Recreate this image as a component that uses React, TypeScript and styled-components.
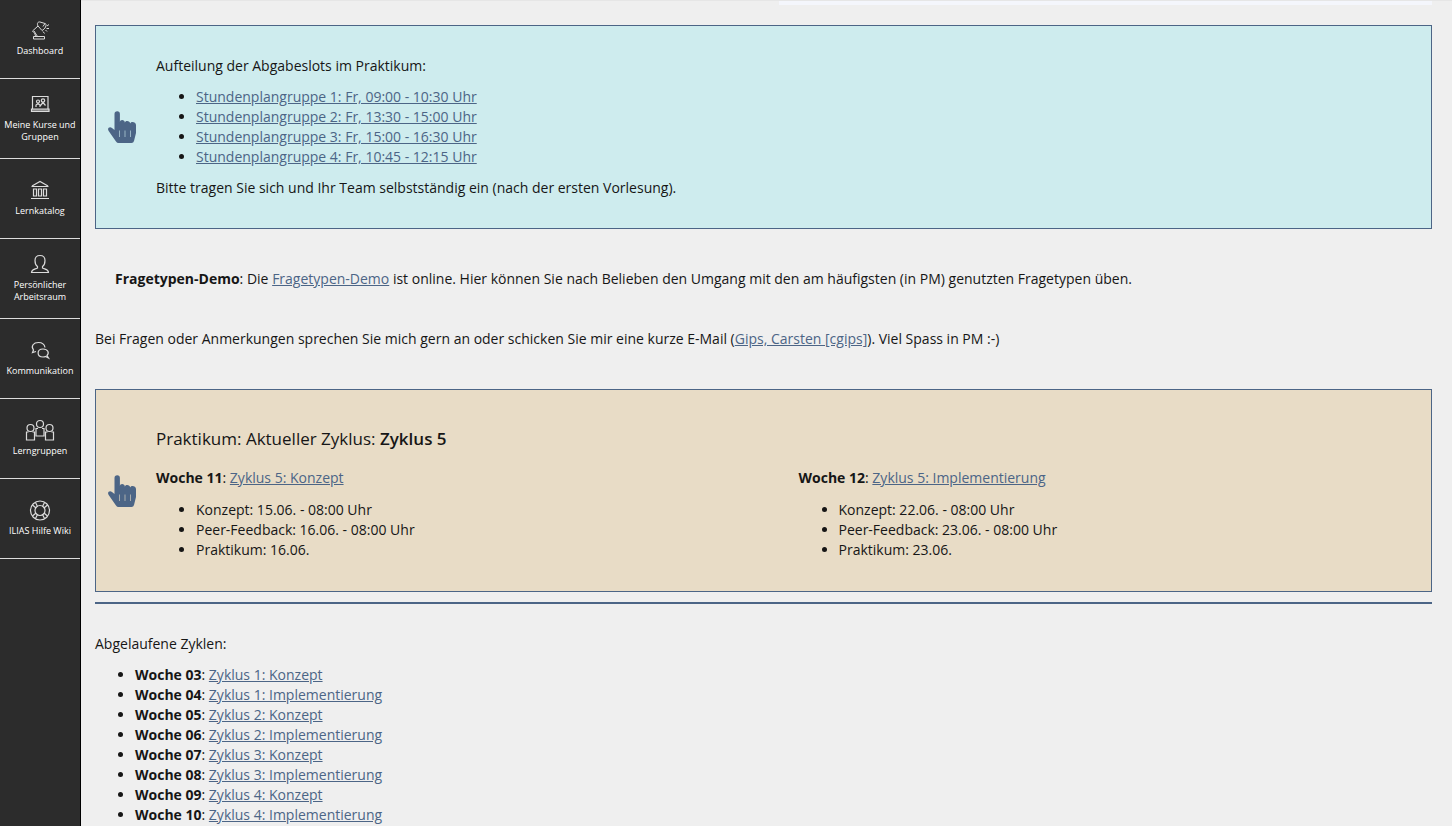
import React from "react";
import styled, { createGlobalStyle } from "styled-components";

const GlobalStyle = createGlobalStyle`
  * {
    box-sizing: border-box;
  }
  body {
    margin: 0;
    background: #efefef;
    color: #161616;
    font-family: "Open Sans", sans-serif;
    font-size: 14px;
    line-height: 20px;
  }
`;

const Layout = styled.div`
  display: flex;
  height: 100vh;
  overflow: hidden;
`;

const Sidebar = styled.nav`
  flex: 0 0 81px;
  background: #2c2c2c;
  border-right: 1px solid #000;
`;

const NavButton = styled.button`
  display: flex;
  flex-direction: column;
  align-items: center;
  justify-content: center;
  gap: 5px;
  width: 100%;
  height: 80px;
  padding: 0 0 1px;
  border: 0;
  border-bottom: 1px solid #ddd;
  background: none;
  color: #fff;
  font-family: inherit;
  font-size: 9px;
  font-weight: 500;
  line-height: 12px;
  cursor: pointer;

  &:first-child {
    height: 79px;
  }
`;

const NavIcon = styled.svg`
  display: block;
  width: 30px;
  height: 20px;
  overflow: visible;
  fill: none;
  stroke: #dcdcdc;
  stroke-width: 1.2;
`;

const Main = styled.main`
  flex: 1;
  min-width: 0;
  overflow: hidden;
  padding: 0 20px 0 14px;
  border-top: 1px solid #e6e6e6;
`;

const TopStrip = styled.div`
  width: calc(50% - 15px);
  height: 4px;
  margin: 0 0 20px auto;
  background: #f4f6fc;
`;

const Card = styled.section<{ $tone: string }>`
  display: grid;
  grid-template-columns: 60px 1fr;
  align-items: center;
  padding: 30px 0;
  border: 1px solid #4c6586;
  background: ${(p) => p.$tone};
`;

const Hand = styled.svg`
  width: 28px;
  height: 32px;
  margin-left: 12px;
  fill: #4c6586;
`;

const Text = styled.p`
  margin: 0;
`;

const Note = styled.p`
  margin: 40px 20px;
`;

const Contact = styled.p`
  margin: 0 0 40px;
`;

const List = styled.ul<{ $spaced?: boolean }>`
  margin: 11px 0 ${(p) => (p.$spaced ? "11px" : "0")};
  padding-left: 40px;
`;

const Strong = styled.strong`
  font-weight: 700;
`;

const Link = styled.a`
  color: #4c6586;
  text-decoration: underline;
`;

const Heading = styled.h3`
  margin: 7px 0 17px;
  font-size: 17px;
  font-weight: 400;
  line-height: 24px;

  ${Strong} {
    font-weight: 600;
  }
`;

const Weeks = styled.div`
  display: grid;
  grid-template-columns: 1fr 1fr;
  gap: 10px;
`;

const Week = styled.div`
  display: flex;
  flex-direction: column;
  gap: 1px;
  padding-bottom: 1px;
`;

const Divider = styled.hr`
  height: 2px;
  margin: 10px 0 30px;
  border: 0;
  background: #4c6586;
`;

const navItems: { label: string; icon: React.ReactNode }[] = [
  {
    label: "Dashboard",
    icon: (
      <path
        strokeWidth="1"
        d="M8.500 16.500h11v2.500h-11zM10.500 16.500c0-2-1-3.500-3-5.500l5.500-5M13 6l4 4.500c1-.5 3-2 3.500-3.500M13 6c-1.500-2.500 0-4.500 2-4L20 3.500l-2 3M9 11l3.500 5.500M20.500 3.500c.5.500 1 2 0 3.500M21.500 8.500h2.500M22 6l2-1.500M18 11.500l1.500 2M20.500 10l1.500 1.500"
      />
    ),
  },
  {
    label: "Meine Kurse und Gruppen",
    icon: (
      <>
        <path d="M7.500 15v-12.500h15.500v12.500" />
        <path d="M6.500 15h17.500v2.500h-17.500z" fill="#888" />
        <circle cx="13" cy="7.500" r="1.500" />
        <circle cx="18" cy="6.500" r="1.700" />
        <path d="M11 13v-2l2-1.500 2 1.500v2M15.500 11.500l2.500-3 2.500 3" />
      </>
    ),
  },
  {
    label: "Lernkatalog",
    icon: (
      <path d="M6 18.500h18M6.500 6.500h17M7 6 15 1.500 23 6M8.500 9h3v7h-3zM13.500 9h3v7h-3zM18.500 9h3v7h-3z" />
    ),
  },
  {
    label: "Persönlicher Arbeitsraum",
    icon: (
      <path d="M15 1.500c-3.500 0-5 2-5 5 0 3 1 5 2.500 6v1.500c-3.500 1.500-6 1.500-6 4.500h17c0-3-2.500-3-6-4.500v-1.500c1.500-1 2.500-3 2.500-6 0-3-1.500-5-5-5z" />
    ),
  },
  {
    label: "Kommunikation",
    icon: (
      <>
        <path d="M11 11.500 7.500 12.500 8.500 10C5.500 6 8.500 2.500 13.500 2.500c3.500 0 6 2 6.500 5" />
        <path d="M22 15.500c2.500-2.500 1-6.500-4-6.500-6.500 0-6.500 8 0 8 1 0 1.500 0 2.500-.5l3 1.500z" />
      </>
    ),
  },
  {
    label: "Lerngruppen",
    icon: (
      <>
        <circle cx="5.500" cy="8" r="3.500" />
        <circle cx="15" cy="4" r="3.500" />
        <circle cx="24.500" cy="8" r="3.500" />
        <path d="M3.500 12h-2v8h8v-8h-2M13 8.500h-2v7.500h8v-7.500h-2M22.500 12h-2v8h8v-8h-2" />
      </>
    ),
  },
  {
    label: "ILIAS Hilfe Wiki",
    icon: (
      <>
        <circle cx="15" cy="10.500" r="9.500" />
        <circle cx="15" cy="10.500" r="5" />
        <path d="M10.500 2.500 12.500 6.500M7.500 5l3.500 3M19.500 2.500l-2 4M22.500 5l-3.500 3M10.500 18.500l2-4M7.500 16l3.500-3M19.500 18.500l-2-4M22.500 16l-3.500-3" />
      </>
    ),
  },
];

const slots = [
  "Stundenplangruppe 1: Fr, 09:00 - 10:30 Uhr",
  "Stundenplangruppe 2: Fr, 13:30 - 15:00 Uhr",
  "Stundenplangruppe 3: Fr, 15:00 - 16:30 Uhr",
  "Stundenplangruppe 4: Fr, 10:45 - 12:15 Uhr",
];

const currentWeeks = [
  {
    week: "Woche 11",
    link: "Zyklus 5: Konzept",
    dates: ["Konzept: 15.06. - 08:00 Uhr", "Peer-Feedback: 16.06. - 08:00 Uhr", "Praktikum: 16.06."],
  },
  {
    week: "Woche 12",
    link: "Zyklus 5: Implementierung",
    dates: ["Konzept: 22.06. - 08:00 Uhr", "Peer-Feedback: 23.06. - 08:00 Uhr", "Praktikum: 23.06."],
  },
];

const pastWeeks = [
  ["Woche 03", "Zyklus 1: Konzept"],
  ["Woche 04", "Zyklus 1: Implementierung"],
  ["Woche 05", "Zyklus 2: Konzept"],
  ["Woche 06", "Zyklus 2: Implementierung"],
  ["Woche 07", "Zyklus 3: Konzept"],
  ["Woche 08", "Zyklus 3: Implementierung"],
  ["Woche 09", "Zyklus 4: Konzept"],
  ["Woche 10", "Zyklus 4: Implementierung"],
];

const HandUp = () => (
  <Hand viewBox="0 0 28 32" aria-hidden="true">
    <path
      fillRule="evenodd"
      d="M6.500 3a2.700 2.700 0 0 1 5.400 0v8c0-2.800 5-2.800 5 .8 0-2.800 5.300-2.500 5.300.8 0-2.500 5.800-2.300 5.800 1.400v8l-2 8q-.5 2-2.500 2h-13q-1.500 0-2.500-1.500L1 20.500C-1.500 17.500 1.500 15 4 17l2.500 2zM11.200 19.500v6.500h.6v-6.500zM16.700 19.500v6.500h.6v-6.500zM22.200 19.500v6.500h.6v-6.500z"
    />
  </Hand>
);

export default function App() {
  return (
    <>
      <GlobalStyle />
      <Layout>
        <Sidebar>
          {navItems.map((item) => (
            <NavButton key={item.label} type="button">
              <NavIcon viewBox="0 0 30 20" aria-hidden="true">
                {item.icon}
              </NavIcon>
              <span>{item.label}</span>
            </NavButton>
          ))}
        </Sidebar>
        <Main>
          <TopStrip />
          <Card $tone="#ceecee">
            <HandUp />
            <div>
              <Text>Aufteilung der Abgabeslots im Praktikum:</Text>
              <List $spaced>
                {slots.map((slot) => (
                  <li key={slot}>
                    <Link href="#">{slot}</Link>
                  </li>
                ))}
              </List>
              <Text>Bitte tragen Sie sich und Ihr Team selbstständig ein (nach der ersten Vorlesung).</Text>
            </div>
          </Card>
          <Note>
            <Strong>Fragetypen-Demo</Strong>: Die <Link href="#">Fragetypen-Demo</Link> ist online. Hier können Sie
            nach Belieben den Umgang mit den am häufigsten (in PM) genutzten Fragetypen üben.
          </Note>
          <Contact>
            Bei Fragen oder Anmerkungen sprechen Sie mich gern an oder schicken Sie mir eine kurze E-Mail (
            <Link href="#">Gips, Carsten [cgips]</Link>). Viel Spass in PM :-)
          </Contact>
          <Card $tone="#e8dcc6">
            <HandUp />
            <div>
              <Heading>
                Praktikum: Aktueller Zyklus: <Strong>Zyklus 5</Strong>
              </Heading>
              <Weeks>
                {currentWeeks.map((w) => (
                  <Week key={w.week}>
                    <Text>
                      <Strong>{w.week}</Strong>: <Link href="#">{w.link}</Link>
                    </Text>
                    <List>
                      {w.dates.map((d) => (
                        <li key={d}>{d}</li>
                      ))}
                    </List>
                  </Week>
                ))}
              </Weeks>
            </div>
          </Card>
          <Divider />
          <Text>Abgelaufene Zyklen:</Text>
          <List>
            {pastWeeks.map(([week, link]) => (
              <li key={week}>
                <Strong>{week}</Strong>: <Link href="#">{link}</Link>
              </li>
            ))}
          </List>
        </Main>
      </Layout>
    </>
  );
}
